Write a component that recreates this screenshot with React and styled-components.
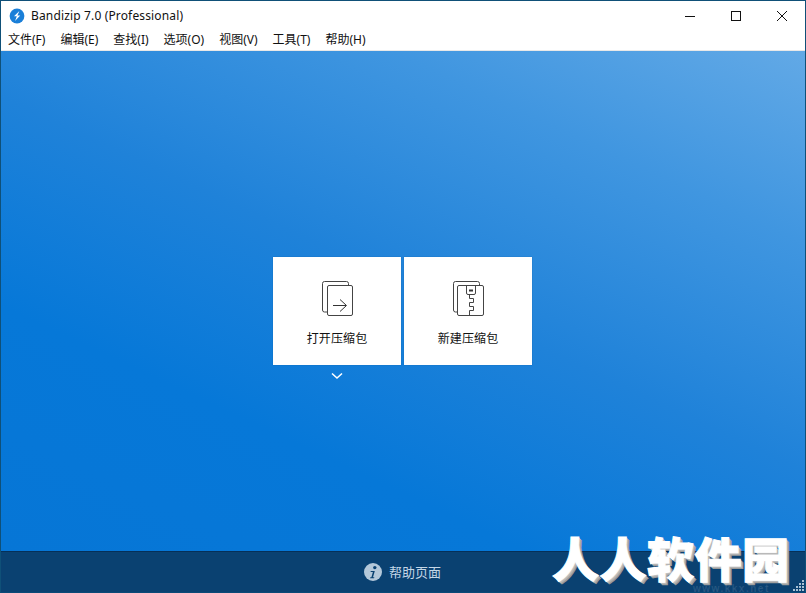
import React from "react";
import styled, { createGlobalStyle } from "styled-components";

const GlobalStyle = createGlobalStyle`
  html, body {
    margin: 0;
    height: 100%;
    overflow: hidden;
  }
  body {
    font-family: "Noto Sans", "Noto Sans CJK SC", sans-serif;
    font-size: 12px;
    color: #111;
  }
  #root {
    height: 100%;
  }
`;

const Window = styled.div`
  position: relative;
  width: 806px;
  height: 593px;
  box-sizing: border-box;
  border: 1px solid #0f5078;
  border-bottom: 1px solid #0a4a78;
  display: flex;
  flex-direction: column;
  background: #fff;
  overflow: hidden;
`;

const TitleBar = styled.div`
  height: 29px;
  display: flex;
  align-items: center;
  padding-left: 8px;
  background: #fff;
`;

const AppLogo = styled.svg`
  width: 16px;
  height: 16px;
  margin-right: 6px;
`;

const Title = styled.div`
  flex: 1;
  font-size: 12px;
  letter-spacing: 0.15px;
`;

const WindowButton = styled.div`
  width: 46px;
  height: 29px;
  display: flex;
  align-items: center;
  justify-content: center;
`;

const MenuBar = styled.div`
  height: 21px;
  display: flex;
  align-items: center;
  gap: 15px;
  padding-left: 7px;
  background: #fff;
  border-bottom: 1px solid #e8e8e8;
  box-sizing: border-box;
`;

const MenuItem = styled.div`
  font-size: 12px;
  white-space: nowrap;
  line-height: 16px;
`;

const Main = styled.div`
  flex: 1;
  display: flex;
  flex-direction: column;
  align-items: center;
  padding-top: 206px;
  box-sizing: border-box;
  background: linear-gradient(205deg, #62a9e6 0%, #4096e0 22%, #1f82d9 48%, #0678d8 72%, #0676d6 100%);
`;

const CardRow = styled.div`
  display: flex;
  gap: 3px;
  margin-left: -1px;
`;

const Card = styled.div`
  width: 128px;
  height: 108px;
  background: #fff;
  display: flex;
  flex-direction: column;
  align-items: center;
  padding-top: 23px;
  box-sizing: border-box;
  box-shadow: 0 0 1px rgba(6, 70, 130, 0.5);
`;

const CardIcon = styled.svg`
  width: 32px;
  height: 36px;
`;

const CardLabel = styled.div`
  margin-top: 15px;
  font-size: 12px;
  line-height: 16px;
  letter-spacing: 0.1px;
  color: #111;
`;

const MoreRow = styled.div`
  width: 259px;
  margin-top: 7px;
  margin-left: -1px;
  padding-left: 58px;
  box-sizing: border-box;
`;

const Chevron = styled.svg`
  display: block;
  width: 12px;
  height: 8px;
`;

const HelpBar = styled.div`
  height: 41px;
  display: flex;
  align-items: center;
  justify-content: center;
  gap: 7px;
  padding-right: 1px;
  padding-bottom: 1px;
  background: #0a4171;
  border-top: 1px solid #063058;
  box-sizing: border-box;
`;

const HelpIcon = styled.svg`
  width: 18px;
  height: 18px;
`;

const HelpLabel = styled.div`
  font-size: 13px;
  color: #c4d6e6;
`;

const Watermark = styled.div`
  position: absolute;
  left: 551px;
  top: 531px;
  font-family: "Noto Sans CJK SC", sans-serif;
  font-size: 47px;
  font-weight: 900;
  line-height: 50px;
  letter-spacing: 0.5px;
  white-space: nowrap;
  color: #fff;
  -webkit-text-stroke: 1px #fff;
  text-shadow: 1px 1px 0 #c8c8c8, 2px 2px 0 #b4b4b4, 3px 3px 0 #9a9a9a;
`;

const WatermarkUrl = styled.div`
  position: absolute;
  left: 692px;
  top: 583px;
  font-family: "Liberation Sans", sans-serif;
  font-size: 10px;
  line-height: 9px;
  font-weight: 700;
  letter-spacing: 1.5px;
  color: rgba(255, 255, 255, 0.12);
`;

const Grip = styled.svg`
  position: absolute;
  right: 0;
  bottom: 0;
  width: 12px;
  height: 12px;
`;

const menus = ["文件(F)", "编辑(E)", "查找(I)", "选项(O)", "视图(V)", "工具(T)", "帮助(H)"];

const gripDots = [
  [9, 0], [6, 3], [9, 3], [3, 6], [6, 6], [9, 6], [0, 9], [3, 9], [6, 9], [9, 9],
];

export default function App() {
  return (
    <Window>
      <GlobalStyle />
      <TitleBar>
        <AppLogo viewBox="0 0 16 16">
          <circle cx="8" cy="8" r="7.4" fill="#1a7fd8" />
          <path d="M10.400 3 5 8.200h2.800L6 13l5.200-5.400H8.400z" fill="#fff" />
        </AppLogo>
        <Title>Bandizip 7.0 (Professional)</Title>
        <WindowButton>
          <svg width="10" height="10" viewBox="0 0 10 10">
            <path d="M0 5.500h10" stroke="#111" strokeWidth="1" />
          </svg>
        </WindowButton>
        <WindowButton>
          <svg width="10" height="10" viewBox="0 0 10 10">
            <rect x="0.5" y="0.5" width="9" height="9" fill="none" stroke="#111" />
          </svg>
        </WindowButton>
        <WindowButton>
          <svg width="10" height="10" viewBox="0 0 10 10">
            <path d="M0 0l10 10M10 0 0 10" stroke="#111" strokeWidth="1" />
          </svg>
        </WindowButton>
      </TitleBar>
      <MenuBar>
        {menus.map((m) => (
          <MenuItem key={m}>{m}</MenuItem>
        ))}
      </MenuBar>
      <Main>
        <CardRow>
          <Card>
            <CardIcon viewBox="0 0 32 36" fill="none" stroke="#444" strokeWidth="1">
              <path d="M6.500 32h-3a2 2 0 0 1-2-2V3.500a2 2 0 0 1 2-2h22a2 2 0 0 1 2 2v2" />
              <rect x="6.500" y="5.500" width="25" height="30" rx="1.500" />
              <path d="M12 25.500h13M19 19.500l6.500 6-6.500 6" stroke="#333" />
            </CardIcon>
            <CardLabel>打开压缩包</CardLabel>
          </Card>
          <Card>
            <CardIcon viewBox="0 0 32 36" fill="none" stroke="#444" strokeWidth="1">
              <path d="M5.500 32h-2a2 2 0 0 1-2-2V3.500a2 2 0 0 1 2-2h22a2 2 0 0 1 2 2v2" />
              <rect x="5.500" y="5.500" width="26" height="30" rx="1.500" />
              <path d="M14.500 5.500v7.500a1.500 1.500 0 0 0 1.500 1.500h6a1.500 1.500 0 0 0 1.500-1.500V5.500" />
              <path d="M17 10.500h4" stroke="#333" strokeWidth="2" />
              <path d="M17.500 14.500v4h4v4h-4v4h4v4h-4v4.500" />
            </CardIcon>
            <CardLabel>新建压缩包</CardLabel>
          </Card>
        </CardRow>
        <MoreRow>
          <Chevron viewBox="0 0 12 8">
            <path d="M1 1.500 6 6l5-4.500" fill="none" stroke="#fff" strokeWidth="1.600" />
          </Chevron>
        </MoreRow>
      </Main>
      <HelpBar>
        <HelpIcon viewBox="0 0 18 18">
          <circle cx="9" cy="9" r="9" fill="#b4c8da" />
          <circle cx="10.800" cy="4.600" r="1.700" fill="#0a4171" />
          <path d="M6.800 8h4l-1.800 6.200h1.400l-.4 1.100H6l.4-1.100h1L8.900 9H6.500z" fill="#0a4171" />
        </HelpIcon>
        <HelpLabel>帮助页面</HelpLabel>
      </HelpBar>
      <Watermark>人人软件园</Watermark>
      <WatermarkUrl>www.kkx.net</WatermarkUrl>
      <Grip viewBox="0 0 12 12">
        {gripDots.map(([x, y]) => (
          <rect key={`${x}-${y}`} x={x} y={y} width="2" height="2" fill="#a8c0d4" />
        ))}
      </Grip>
    </Window>
  );
}
